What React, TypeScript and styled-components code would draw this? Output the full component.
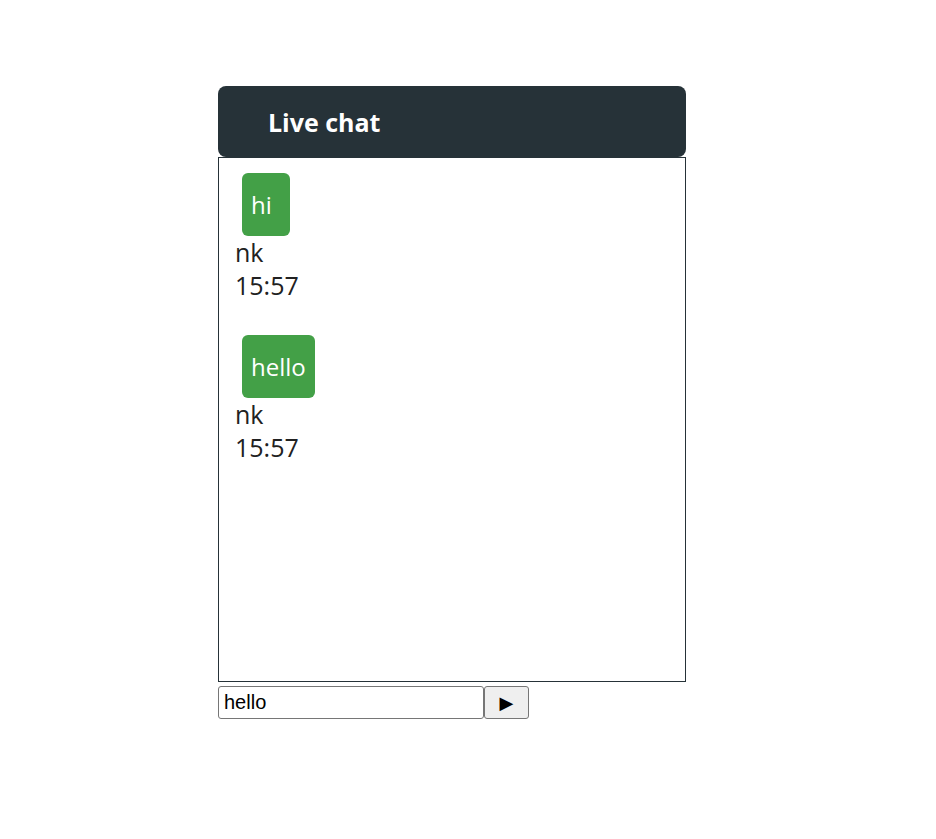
import React from "react";
import styled, { createGlobalStyle } from "styled-components";

const Global = createGlobalStyle`
  body {
    margin: 0;
    background: #ffffff;
    font-family: "Open Sans", "DejaVu Sans", sans-serif;
  }
`;

const Page = styled.div`
  padding: 86px 0 0 218px;
`;

const Widget = styled.div`
  width: 468px;
  display: flex;
  flex-direction: column;
`;

const Header = styled.div`
  height: 71px;
  box-sizing: border-box;
  background: #263238;
  border-radius: 8px;
  display: flex;
  align-items: center;
  padding-left: 50px;
  color: #ffffff;
  font-family: "Open Sans", sans-serif;
  font-weight: 700;
  font-size: 25px;
`;

const Messages = styled.div`
  height: 525px;
  box-sizing: border-box;
  border: 1px solid #263238;
  padding: 15px 16px;
  display: flex;
  flex-direction: column;
  gap: 33px;
  color: #212121;
  font-size: 24px;
`;

const Message = styled.div`
  display: flex;
  flex-direction: column;
  align-items: flex-start;
`;

const Bubble = styled.div`
  margin-left: 7px;
  background: #43a047;
  color: #ffffff;
  border-radius: 6px;
  padding: 15px 9px;
  min-width: 48px;
  box-sizing: border-box;
  line-height: 33px;
`;

const Meta = styled.div`
  line-height: 33px;
  font-size: 25px;
`;

const InputRow = styled.form`
  display: flex;
  margin-top: 4px;
`;

const TextInput = styled.input`
  width: 266px;
  height: 33px;
  box-sizing: border-box;
  border: 1px solid #767676;
  border-radius: 3px;
  padding: 1px 5px;
  font-family: "Liberation Sans", Arial, sans-serif;
  font-size: 20px;
  color: #000;
  outline: none;
`;

const SendButton = styled.button`
  width: 45px;
  height: 33px;
  box-sizing: border-box;
  background: #efefef;
  border: 1px solid #767676;
  border-radius: 3px;
  font-family: "DejaVu Sans", sans-serif;
  font-size: 18px;
  color: #000;
  padding: 0;
  display: flex;
  align-items: center;
  justify-content: center;
`;

const messages = [
  { text: "hi", user: "nk", time: "15:57" },
  { text: "hello", user: "nk", time: "15:57" },
];

export default function App() {
  return (
    <Page>
      <Global />
      <Widget>
        <Header>Live chat</Header>
        <Messages>
          {messages.map((m, i) => (
            <Message key={i}>
              <Bubble>{m.text}</Bubble>
              <Meta>{m.user}</Meta>
              <Meta>{m.time}</Meta>
            </Message>
          ))}
        </Messages>
        <InputRow onSubmit={(e) => e.preventDefault()}>
          <TextInput defaultValue="hello" />
          <SendButton type="submit">▶</SendButton>
        </InputRow>
      </Widget>
    </Page>
  );
}
